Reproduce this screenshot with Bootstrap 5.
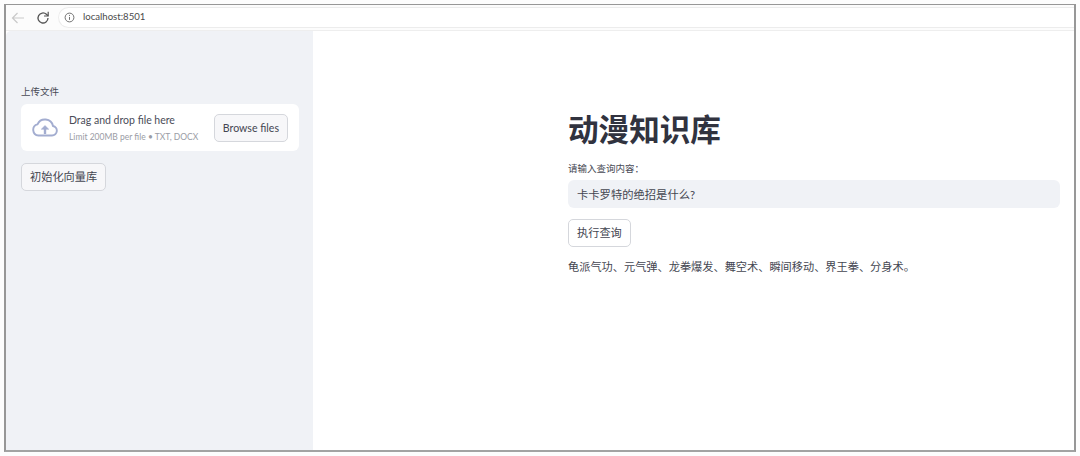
<!DOCTYPE html>
<html lang="zh"><head><meta charset="utf-8"><title>动漫知识库</title>
<link rel="stylesheet" href="https://cdn.jsdelivr.net/npm/bootstrap@5.3.0/dist/css/bootstrap.min.css">
<style>
html,body{height:100%;background:#fdfdfd;overflow:hidden}
body{padding:4px 4px 4px 4px;font-family:Lato,"Noto Sans CJK SC",sans-serif;color:#31333f}
.frame{height:448px;border:2px solid #979797;border-bottom-color:#a3a3a3;background:#fff;border-top-width:1.5px}
.toolbar{height:26px;background:#fcfcfc;border-bottom:1px solid #eeeeee;padding-left:4px;gap:5px}
.urlbar{height:21px;flex:1;background:#fff;border:1px solid #ececec;border-right:0;border-radius:11px 0 0 11px;padding-left:5px;gap:8px;font-size:9.6px;color:#4a4a4a;margin-left:2px}
.tbicon{width:16px;height:16px;flex:none}
.sidebar{width:307px;flex:none;background:#f0f2f6;padding:54px 14px 0 15px;border-top-left-radius:5px}
.uplabel{font-size:9.5px;line-height:14px;margin-bottom:5px;color:#484a55}
.dropzone{height:47px;background:#fff;border-radius:6px;padding:0 11px 0 11px;gap:11px}
.dztitle{font-size:10.5px;line-height:15px;color:#4a4c58;white-space:nowrap}
.dzsub{font-size:8.5px;line-height:12px;margin-top:3px;color:#9a9ca5;white-space:nowrap}
.sbtn{font-size:11.2px;line-height:14px;color:#444651;background:#f7f7f9;border:1px solid #d5d7dc;border-radius:5px;padding:6px 8px;white-space:nowrap;height:28px}
.sbtn.latin{font-size:10.6px}
.sbtn.bw{background:#fff}
.initbtn{margin-top:12px;background:#f7f7f9}
.mainpane{flex:1;padding:75px 14px 0 255px;min-width:0}
.apptitle{font-size:30.6px;font-weight:700;line-height:48px;margin:0;color:#31333f}
.qlabel{font-size:9.5px;line-height:14px;margin:8px 0 4px;color:#484a55}
.qinput{height:28px;background:#f0f2f6;border:0;border-radius:6px;padding:0 9px;font-size:11.3px;color:#444651;box-shadow:none}
.qinput:focus{background:#f0f2f6;box-shadow:none;color:#444651}
.runbtn{margin-top:11px;display:block;font-size:11.2px;padding:5px 8px}
.answer{font-size:11.2px;line-height:16px;margin:12px 0 0;color:#444651}
</style></head>
<body>
<div class="frame d-flex flex-column">
  <div class="toolbar d-flex align-items-center">
    <svg class="tbicon" viewBox="0 0 16 16" fill="none" stroke="#c9c9c9" stroke-width="1.2"><path d="M14 8H2.5M7.5 3l-5 5 5 5"/></svg>
    <svg class="tbicon ms-1" viewBox="0 0 16 16" fill="none" stroke="#555" stroke-width="1.3"><path d="M13 8a5 5 0 1 1-1.6-3.7L13 5.8"/><path d="M13.2 1.8v4.2H9" stroke-width="1.2"/></svg>
    <div class="urlbar d-flex align-items-center">
      <svg width="11" height="11" viewBox="0 0 12 12" fill="none" stroke="#666"><circle cx="6" cy="6" r="4.8"/><path d="M6 5.4v3.2M6 3.2v1.1"/></svg>
      <span>localhost:8501</span>
    </div>
  </div>
  <div class="d-flex flex-grow-1">
    <aside class="sidebar">
      <div class="uplabel">上传文件</div>
      <div class="dropzone d-flex align-items-center">
        <svg width="26" height="21" viewBox="0 0 26 21" fill="none" stroke="#a3add0" stroke-width="1.9" class="flex-shrink-0"><path d="M6.5 18.5h13.5a4.8 4.8 0 0 0 1-9.5A8.2 8.2 0 0 0 5.5 7.3 5.7 5.7 0 0 0 6.5 18.5z"/><path d="M13 17V11" stroke-width="2.4"/><path d="M9.3 12.2l3.7-3.6 3.7 3.6z" fill="#a3add0" stroke-width=".6"/></svg>
        <div class="flex-grow-1">
          <div class="dztitle">Drag and drop file here</div>
          <div class="dzsub">Limit 200MB per file • TXT, DOCX</div>
        </div>
        <button type="button" class="btn sbtn latin">Browse files</button>
      </div>
      <button type="button" class="btn sbtn initbtn">初始化向量库</button>
    </aside>
    <main class="mainpane">
      <h1 class="apptitle">动漫知识库</h1>
      <div class="qlabel">请输入查询内容：</div>
      <input type="text" class="form-control qinput" value="卡卡罗特的绝招是什么?">
      <button type="button" class="btn sbtn bw runbtn">执行查询</button>
      <p class="answer">龟派气功、元气弹、龙拳爆发、舞空术、瞬间移动、界王拳、分身术。</p>
    </main>
  </div>
</div>
</body></html>
